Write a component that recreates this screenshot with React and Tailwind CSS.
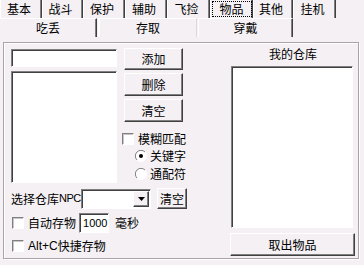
import React from "react";

const raised =
  "border border-t-white border-l-white border-r-[#404040] border-b-[#404040] shadow-[inset_-1px_-1px_0_#808080]";
const sunken =
  "border border-t-[#808080] border-l-[#808080] border-r-white border-b-white shadow-[inset_1px_1px_0_#404040] bg-white";

const topTabs = [
  { label: "基本", w: "w-[42px]" },
  { label: "战斗", w: "w-[41px]" },
  { label: "保护", w: "w-[42px]" },
  { label: "辅助", w: "w-[42px]" },
  { label: "飞捡", w: "w-[43px]" },
  { label: "物品", w: "w-[43px]", focus: true },
  { label: "其他", w: "w-[40px]" },
  { label: "挂机", w: "w-[43px]" },
];

function Button({ children, className = "" }) {
  return (
    <div className={`${raised} flex items-center justify-center ${className}`}>
      {children}
    </div>
  );
}

function CheckBox() {
  return (
    <div className="w-[12px] h-[12px] border border-t-[#808080] border-l-[#808080] border-r-white border-b-white shadow-[inset_1px_1px_0_#c8c4c8] bg-white shrink-0" />
  );
}

function Radio({ checked }) {
  return (
    <svg width="12" height="12" viewBox="0 0 12 12" className="shrink-0">
      <circle cx="6" cy="6" r="5.5" fill="white" />
      <path d="M10 2 A5.5 5.5 0 0 0 2 10" stroke="#808080" strokeWidth="1" fill="none" />
      <path d="M2 10 A5.5 5.5 0 0 0 10 2" stroke="#ffffff" strokeWidth="1" fill="none" />
      {checked && <circle cx="6" cy="6" r="2" fill="black" />}
    </svg>
  );
}

export default function App() {
  return (
    <div className="w-[364px] h-[265px] bg-[#f4f0f4] text-black text-[12px] leading-none font-['Noto_Sans_CJK_SC',sans-serif] overflow-hidden">
      {/* tab row 1 */}
      <div className="flex h-[18px]">
        {topTabs.map((t) => (
          <div
            key={t.label}
            className={`${t.w} h-full flex items-center justify-center border-l border-l-white border-r border-r-[#404040] shadow-[inset_-1px_0_0_#808080]`}
          >
            {t.focus ? (
              <span className="w-[40px] h-[16px] flex items-center justify-center outline-1 outline-dotted outline-black -outline-offset-1">
                {t.label}
              </span>
            ) : (
              <span className="-ml-[4px]">{t.label}</span>
            )}
          </div>
        ))}
      </div>

      {/* tab row 2 */}
      <div className="flex h-[19px]">
        <div className="w-[97px] h-full flex items-center justify-center border-t border-t-white border-r border-r-[#404040] shadow-[inset_-1px_0_0_#808080]">
          吃丢
        </div>
        <div className="w-[99px] h-full flex items-center justify-center border-t border-t-white border-l-2 border-l-white border-r border-r-[#dcd8dc] ml-[1px]">
          存取
        </div>
        <div className="w-[95px] h-full flex items-center justify-center border-t border-t-white border-l border-l-white border-r border-r-[#404040] shadow-[inset_-1px_0_0_#808080] ml-[1px]">
          穿戴
        </div>
      </div>

      {/* panel */}
      <div className="ml-[3px] mt-[5px] w-[356px] h-[217px] border border-[#a8a4a8] shadow-[inset_1px_1px_0_white,1px_1px_0_white] flex">
        {/* left */}
        <div className="w-[226px] pl-[7px] pt-[5px] flex flex-col">
          <div className="flex items-start h-[135px]">
            <div className="w-[106px] flex flex-col">
              <div className={`${sunken} mt-[1px] h-[18px]`} />
              <div className={`${sunken} mt-[4px] h-[112px]`} />
            </div>
            <div className="ml-[7px] w-[59px] flex flex-col">
              <Button className="h-[22px]">添加</Button>
              <Button className="h-[23px] mt-[3px]">删除</Button>
              <Button className="h-[23px] mt-[3px]">清空</Button>
              <div className="mt-[11px] -ml-[2px] h-[12px] flex items-center whitespace-nowrap">
                <CheckBox />
                <span className="ml-[4px]">模糊匹配</span>
              </div>
              <div className="mt-[5px] ml-[11px] h-[12px] flex items-center whitespace-nowrap">
                <Radio checked />
                <span className="ml-[3px]">关键字</span>
              </div>
              <div className="mt-[6px] ml-[11px] h-[12px] flex items-center whitespace-nowrap">
                <Radio />
                <span className="ml-[3px]">通配符</span>
              </div>
            </div>
          </div>

          {/* NPC row */}
          <div className="mt-[5px] h-[21px] flex items-center whitespace-nowrap">
            <span className="w-[70px] flex items-center">
              选择仓库
              <span className="font-['Liberation_Sans',sans-serif] text-[11px] tracking-[-0.5px]">NPC</span>
            </span>
            <div className={`${sunken} w-[70px] h-[20px] flex justify-end items-center pr-[1px]`}>
              <Button className="w-[16px] h-[16px] bg-[#f4f0f4]">
                <svg width="7" height="4" viewBox="0 0 7 4">
                  <path d="M0 0 H7 L3.5 4 Z" fill="black" />
                </svg>
              </Button>
            </div>
            <Button className="ml-[6px] w-[30px] h-[21px]">清空</Button>
          </div>

          {/* auto row */}
          <div className="mt-[4px] h-[20px] flex items-center whitespace-nowrap">
            <div className="ml-[1px]">
              <CheckBox />
            </div>
            <span className="ml-[4px]">自动存物</span>
            <div className={`${sunken} ml-[3px] w-[30px] h-[20px] flex items-center pl-[3px] font-['Liberation_Sans',sans-serif] text-[11px]`}>
              1000
            </div>
            <span className="ml-[6px]">毫秒</span>
          </div>

          {/* alt row */}
          <div className="mt-[7px] h-[12px] flex items-center whitespace-nowrap">
            <div className="ml-[1px]">
              <CheckBox />
            </div>
            <span className="ml-[4px] font-['Liberation_Sans','Noto_Sans_CJK_SC',sans-serif]">Alt+C</span>
            <span>快捷存物</span>
          </div>
        </div>

        {/* right */}
        <div className="w-[126px] flex flex-col">
          <div className="mt-[4px] h-[14px] flex items-center justify-center">我的仓库</div>
          <div className={`${sunken} mt-[5px] ml-[1px] w-[122px] h-[162px]`} />
          <Button className="mt-[5px] w-[125px] h-[23px]">取出物品</Button>
        </div>
      </div>
    </div>
  );
}
